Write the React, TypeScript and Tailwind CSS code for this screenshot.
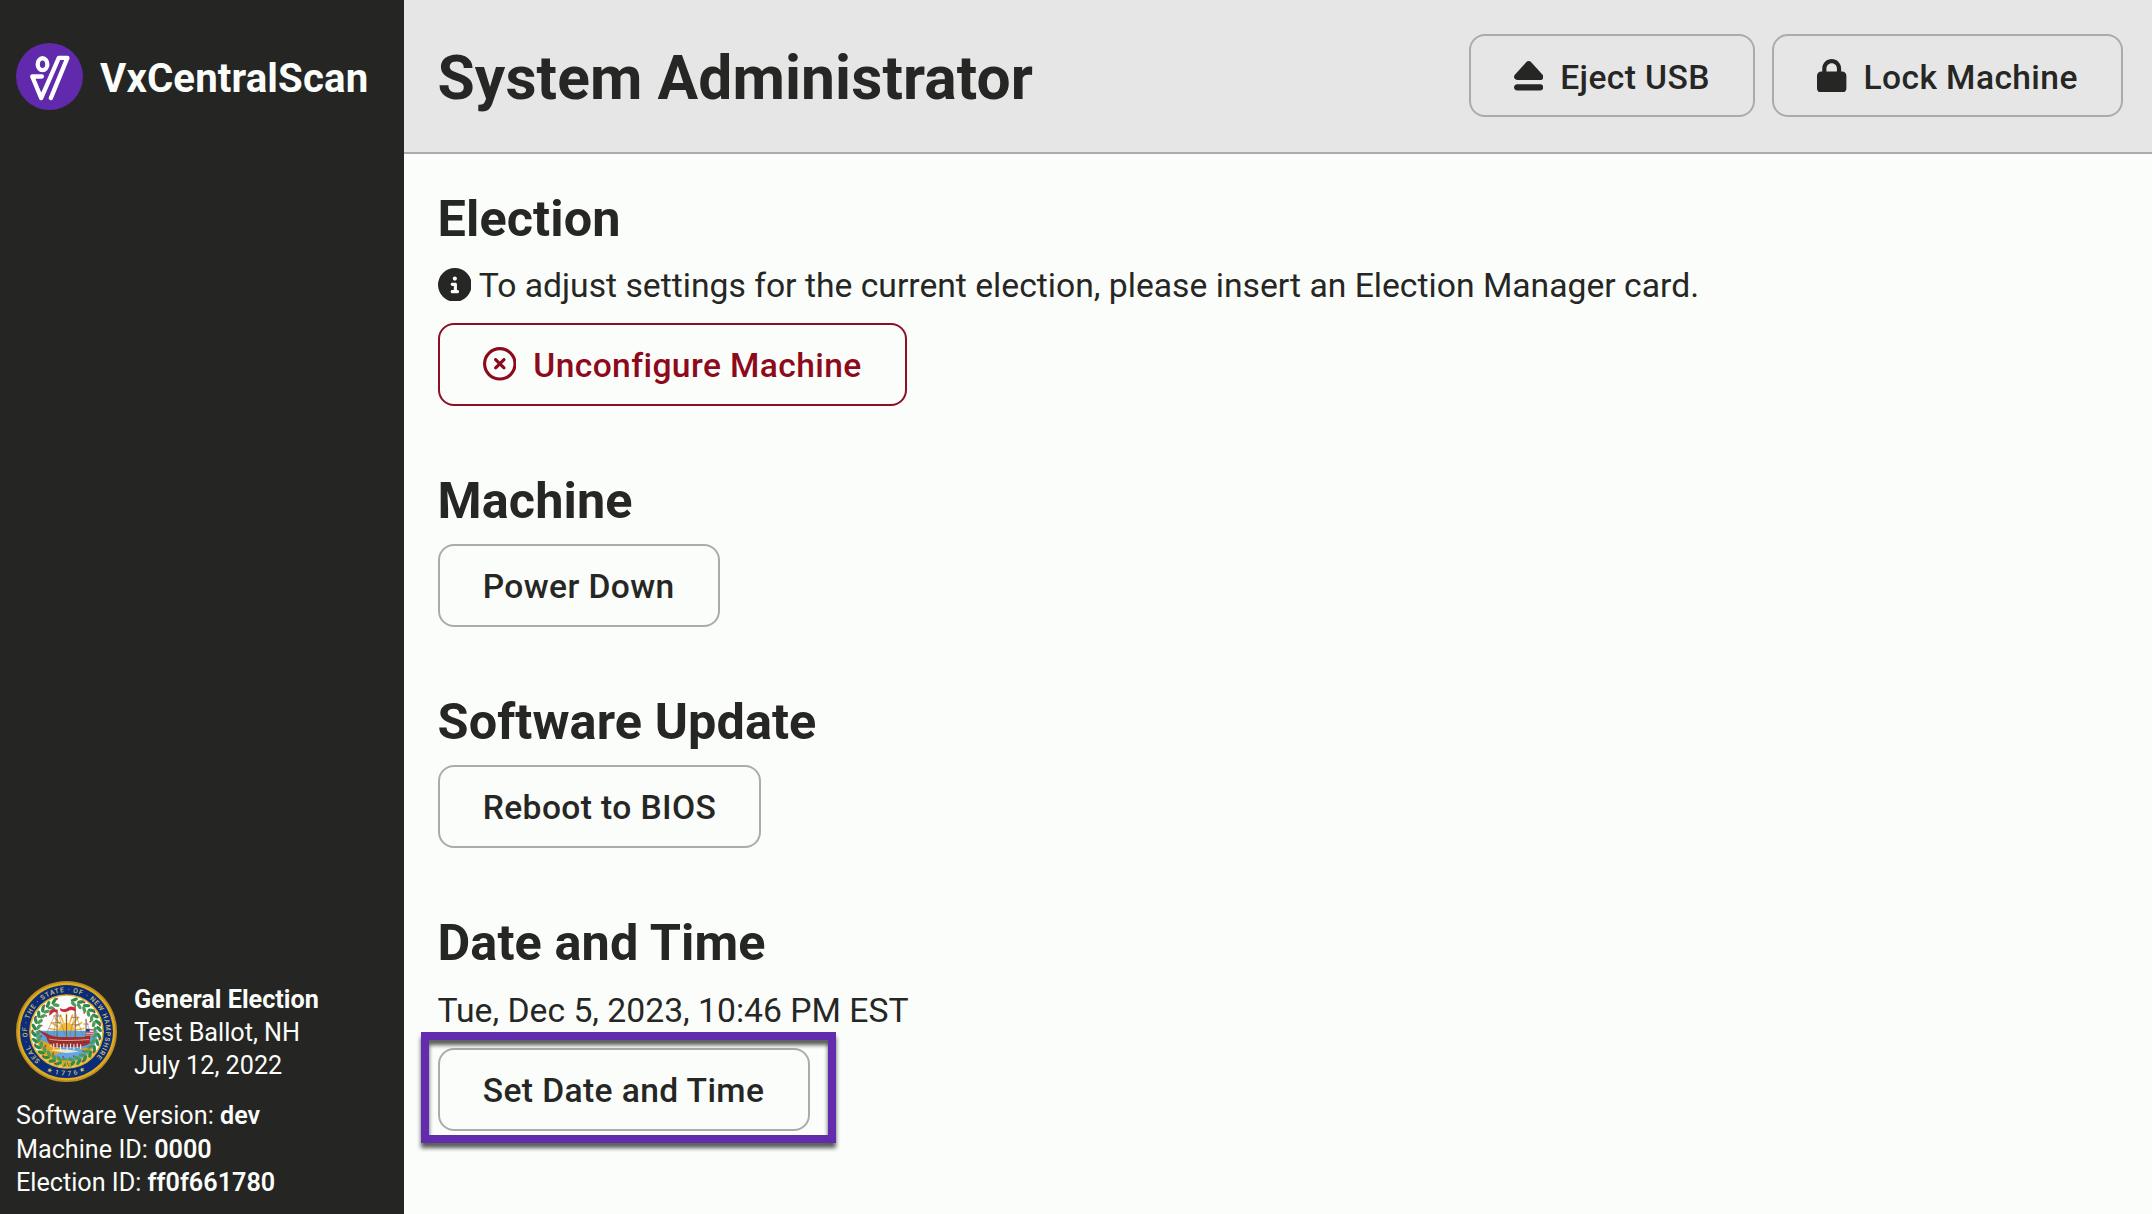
import type { ReactNode } from "react";
import { FaCircleInfo, FaEject, FaLock, FaRegCircleXmark } from "react-icons/fa6";

function Logo() {
  return (
    <svg viewBox="0 0 202 202" className="h-[67px] w-[67px] shrink-0">
      <circle cx="101" cy="101" r="101" fill="#6129ab" />
      <g fill="none" stroke="#fff" strokeWidth="13" strokeLinecap="round" strokeLinejoin="round">
        <ellipse cx="80" cy="64" rx="14.5" ry="18" />
        <path d="M78 101H49L76 166L129 45H155L105 166" />
      </g>
    </svg>
  );
}

const wreath = Array.from({ length: 30 }, (_, i) => i * 12 + 6).filter((a) => a > 14 && a < 346);
const rays = [-80, -60, -40, -20, 0, 20, 40, 60, 80];

function StateSeal() {
  return (
    <svg viewBox="0 0 300 300" className="h-[101px] w-[101px] shrink-0">
      <defs>
        <path id="seal-top" d="M71.7 236.9A117 117 0 1 1 225.2 239.6" />
        <path id="seal-bottom" d="M80.6 261.1A131 131 0 0 0 219.4 261.1" />
        <clipPath id="seal-scene">
          <circle cx="150" cy="150" r="92" />
        </clipPath>
      </defs>
      <circle cx="150" cy="150" r="150" fill="#b98d28" />
      <circle cx="150" cy="150" r="145" fill="#e0ab1b" />
      <circle cx="150" cy="150" r="138" fill="#0b2c78" />
      <circle cx="150" cy="150" r="111" fill="#e3b225" />
      <circle cx="150" cy="150" r="106" fill="#fdfdfb" />
      <path d="M60 206A106 106 0 0 0 240 206Z" fill="#e9bd4a" />
      <text fill="#d2c070" fontFamily="Roboto, sans-serif" fontWeight="500" fontSize="20">
        <textPath href="#seal-top" textLength="548">SEAL · OF · THE · STATE · OF · NEW HAMPSHIRE</textPath>
        <textPath href="#seal-bottom" startOffset="11" textLength="122">★1776★</textPath>
      </text>
      <g clipPath="url(#seal-scene)">
        <g stroke="#efb82f" strokeWidth="5" strokeLinecap="round">
          {rays.map((a) => (
            <path key={a} d="M150 98V120" transform={`rotate(${a} 150 150)`} />
          ))}
        </g>
        <circle cx="150" cy="148" r="25" fill="#f3bd36" />
        <path d="M50 148H250V205H50Z" fill="#5ba3dd" />
        <path d="M50 168Q95 182 128 200Q150 212 190 203L250 190V250H50Z" fill="#dfa51e" />
        <path d="M112 222Q150 200 206 206L224 218Q195 238 160 238Q130 236 112 222Z" fill="#62a6e8" />
        <path d="M100 206Q140 198 188 210L150 214Z" fill="#eee8c8" />
      </g>
      <g fill="#2d8b43">
        {wreath.map((a) => (
          <g key={a} transform={`rotate(${a} 150 150)`}>
            <ellipse cx="143" cy="53" rx="5" ry="11" transform="rotate(52 143 53)" />
            <ellipse cx="145" cy="66" rx="5" ry="10" transform="rotate(118 145 66)" fill="#4d9b59" />
            {a % 24 === 6 && <circle cx="153" cy="49" r="3" fill="#c6283a" />}
            {a % 24 === 18 && <circle cx="152" cy="74" r="2.5" fill="#c6283a" />}
          </g>
        ))}
      </g>
      <g stroke="#8a5b3c" strokeWidth="3" fill="none">
        <path d="M122 84V170M150 100V168M176 88V172M208 112V168" />
        <path d="M110 104H134M110 124H134M164 108H188M164 130H188M200 128H216" strokeWidth="2" />
        <path d="M68 144L90 157L122 88L112 160M122 88L146 160M176 92L160 162M176 92L198 162M208 114L222 160" strokeWidth="1.2" />
      </g>
      <path d="M100 88Q110 80 122 86V94Q112 88 106 98L98 103Z" fill="#c42b3f" />
      <path d="M130 80Q144 88 156 78Q166 72 178 82V91Q164 82 156 89Q144 96 132 88Z" fill="#c42b3f" />
      <path d="M66 146L92 156Q105 164 128 166H200L222 158L218 186Q205 196 172 196H112Q94 186 90 166Z" fill="#a02f32" />
      <path d="M98 172Q140 180 217 174" stroke="#d99a86" strokeWidth="3" fill="none" />
      <path d="M110 181H212" stroke="#6f2527" strokeWidth="3" strokeDasharray="5 5" />
      <path d="M104 196V188M112 203V186M122 198V184M132 204V188M142 198V186M152 204V188M162 200V186M172 205V188M182 199V186M192 202V188" stroke="#f3e6e0" strokeWidth="3.5" />
      <path d="M208 142H230V162H208Z" fill="#e6d3d8" />
      <path d="M208 142H219V151H208Z" fill="#26407f" />
      <path d="M219 145H230M208 154H230M208 160H230" stroke="#bf3446" strokeWidth="3" />
      <path d="M138 254L146 236M150 256V236M162 254L154 236" stroke="#d9a426" strokeWidth="5" />
    </svg>
  );
}

function Button({ children, icon, danger = false }: { children: ReactNode; icon?: ReactNode; danger?: boolean }) {
  return (
    <button
      className={
        "flex h-[83.5px] items-center gap-[17px] rounded-2xl border-2 px-[43.2px] text-[33.6px] font-medium tracking-[0.4px] whitespace-nowrap " +
        (danger ? "border-[#8c1025] text-[#8c0a1c]" : "border-[#aaacab] text-[#262725]")
      }
    >
      {icon}
      <span className="pt-1 leading-10">{children}</span>
    </button>
  );
}

function Section({ title, children }: { title: string; children: ReactNode }) {
  return (
    <section className="flex flex-col items-start">
      <h2 className="mb-[13px] text-[50.4px] leading-[60px] font-bold tracking-[0.1px]">{title}</h2>
      {children}
    </section>
  );
}

export default function App() {
  return (
    <div className="flex h-screen overflow-hidden bg-[#fbfdfa] font-['Roboto',sans-serif] text-[#262725]">
      <aside className="flex w-[403.5px] shrink-0 flex-col justify-between bg-[#252523] px-4 pt-[43px] pb-[15px] text-[#fbfdfa]">
        <div className="flex items-center gap-[17px]">
          <Logo />
          <span className="pt-[5px] text-[40.2px] leading-[48px] font-bold tracking-[0.12px]">VxCentralScan</span>
        </div>
        <div className="text-[25.2px]">
          <div className="flex items-center gap-[17px]">
            <StateSeal />
            <div className="pt-[3px] leading-[32.7px]">
              <div className="font-bold">General Election</div>
              <div>Test Ballot, NH</div>
              <div>July 12, 2022</div>
            </div>
          </div>
          <div className="mt-[17px] leading-[33.2px]">
            <div>Software Version: <span className="font-semibold">dev</span></div>
            <div>Machine ID: <span className="font-semibold">0000</span></div>
            <div>Election ID: <span className="font-semibold">ff0f661780</span></div>
          </div>
        </div>
      </aside>

      <div className="flex min-w-0 grow flex-col">
        <header className="flex h-[154px] shrink-0 items-center justify-between border-b-2 border-[#aaabad] bg-[#e6e6e6] pr-[29px] pb-px pl-[34px]">
          <h1 className="pt-[7px] text-[60.5px] leading-[72px] font-bold tracking-[0.1px]">System Administrator</h1>
          <div className="flex gap-[17px]">
            <Button icon={<FaEject className="w-[0.875em]" />}>Eject USB</Button>
            <Button icon={<FaLock className="w-[0.875em]" />}>Lock Machine</Button>
          </div>
        </header>

        <main className="flex flex-col gap-[64.5px] px-[34px] pt-[35px]">
          <Section title="Election">
            <p className="-mt-[1.5px] mb-3 flex items-center gap-[7.5px] text-[33.7px] leading-[50px]">
              <FaCircleInfo className="relative -top-px shrink-0" />
              To adjust settings for the current election, please insert an Election Manager card.
            </p>
            <Button danger icon={<FaRegCircleXmark />}>Unconfigure Machine</Button>
          </Section>
          <Section title="Machine">
            <Button>Power Down</Button>
          </Section>
          <Section title="Software Update">
            <Button>Reboot to BIOS</Button>
          </Section>
          <Section title="Date and Time">
            <p className="mb-3 text-[33.7px] leading-[50px]">Tue, Dec 5, 2023, 10:46 PM EST</p>
            <div className="relative">
              <Button>Set Date and Time</Button>
              <div className="pointer-events-none absolute -top-[16px] -right-[26px] -bottom-[12px] -left-[16.5px] border-8 border-[#632bad] drop-shadow-[0_5px_2px_rgba(0,0,0,0.65)]" />
            </div>
          </Section>
        </main>
      </div>
    </div>
  );
}
